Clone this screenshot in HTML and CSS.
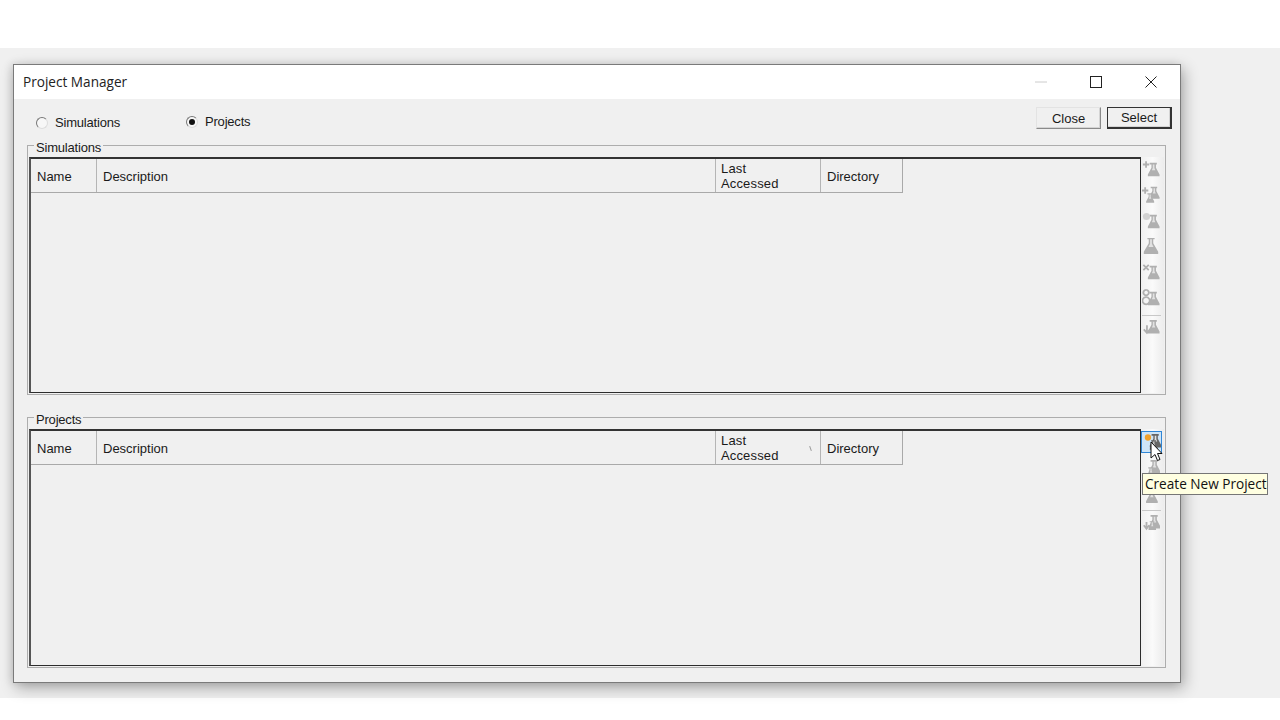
FILE: index.html
```html
<!DOCTYPE html>
<html lang="en">
<head>
<meta charset="utf-8">
<title>Project Manager</title>
<link rel="stylesheet" href="styles.css">
</head>
<body>
<svg class="defs" width="0" height="0" aria-hidden="true">
  <symbol id="flask" viewBox="0 0 20 20">
    <path d="M8.500 3h8v2h-1V8.500l4 7.500V18H6.500v-2l4-7.500V5h-2z" fill="currentColor"/>
    <path d="M12 5h1.800V9l1 2.500h-3.800l1-2.500z" fill="#e2e2e2"/>
  </symbol>
</svg>
<main class="desktop">
  <section class="window">
    <header class="titlebar">
      <span class="title">Project Manager</span>
      <div class="winbtns">
        <svg class="winbtn" viewBox="0 0 12 12"><path d="M0 6h12" stroke="#ccc" fill="none"/></svg>
        <svg class="winbtn" viewBox="0 0 12 12"><rect x=".5" y=".5" width="11" height="11" stroke="#222" fill="none"/></svg>
        <svg class="winbtn" viewBox="0 0 12 12"><path d="M.5.500l11 11M11.500.500l-11 11" stroke="#222" fill="none"/></svg>
      </div>
    </header>
    <div class="body">
      <div class="topbar">
        <div class="radios">
          <label class="radio radio-sim"><span class="dot"></span>Simulations</label>
          <label class="radio radio-proj"><span class="dot on"></span>Projects</label>
        </div>
        <div class="actions">
          <button class="btn">Close</button>
          <button class="btn default">Select</button>
        </div>
      </div>

      <div class="group group-sim">
        <span class="legend">Simulations</span>
        <div class="table">
          <div class="thead">
            <div class="th c-name">Name</div>
            <div class="th c-desc">Description</div>
            <div class="th c-last">Last<br>Accessed</div>
            <div class="th c-dir">Directory</div>
          </div>
        </div>
        <div class="tools">
          <svg class="tool" viewBox="0 0 20 20"><use href="#flask"/><path d="M1 5h7M4.500 1.500v7" stroke="currentColor" stroke-width="2"/></svg>
          <svg class="tool" viewBox="0 0 20 20"><use href="#flask" transform="translate(2 -2) scale(.9)"/><use href="#flask" transform="translate(0 6) scale(.7)"/><path d="M0 5h7M3.500 1.500v7" stroke="currentColor" stroke-width="2"/></svg>
          <svg class="tool" viewBox="0 0 20 20"><use href="#flask"/><circle cx="5" cy="5" r="4" fill="#d2d2d2"/></svg>
          <svg class="tool" viewBox="0 0 20 20"><path d="M6 1h8v1.500h-1.500V7l5.500 9.500V19H2v-2.500L7.500 7V2.500H6z" fill="currentColor"/><path d="M9 2.500h2V7.500l1.800 3.500H7.200L9 7.500z" fill="#e2e2e2"/></svg>
          <svg class="tool" viewBox="0 0 20 20"><use href="#flask"/><path d="M1.500 2l6 6M7.500 2l-6 6" stroke="currentColor" stroke-width="2"/></svg>
          <svg class="tool" viewBox="0 0 20 20"><use href="#flask"/><path d="M4.500 1a3 3 0 1 0 .1 0M4.500 9a4 4 0 1 0 .1 0" stroke="currentColor" stroke-width="2" fill="none"/></svg>
          <hr class="sep">
          <svg class="tool" viewBox="0 0 20 20"><use href="#flask" transform="translate(0 -2)"/><path d="M5.500 7v8M2 11.500l3.500 4 3.500-4" stroke="currentColor" stroke-width="2" fill="none"/></svg>
        </div>
      </div>

      <div class="group group-proj">
        <span class="legend">Projects</span>
        <div class="table">
          <div class="thead">
            <div class="th c-name">Name</div>
            <div class="th c-desc">Description</div>
            <div class="th c-last">Last<br>Accessed<span class="sort"></span></div>
            <div class="th c-dir">Directory</div>
          </div>
        </div>
        <div class="tools">
          <div class="tool-hover">
            <svg class="tool dark" viewBox="0 0 20 20"><use href="#flask" transform="translate(1 -2)"/><use href="#flask" transform="translate(3 6) scale(.7)"/><circle cx="5.500" cy="5" r="3.500" fill="#f0a02a"/></svg>
          </div>
          <svg class="tool" viewBox="0 0 20 20"><use href="#flask" transform="translate(1 -2)"/><use href="#flask" transform="translate(1 7) scale(.7)"/></svg>
          <svg class="tool" viewBox="0 0 20 20"><use href="#flask" transform="translate(-2 2)"/></svg>
          <hr class="sep">
          <svg class="tool" viewBox="0 0 20 20"><use href="#flask" transform="translate(1 -2)"/><use href="#flask" transform="translate(3 6) scale(.65)"/><path d="M5 9v7M2 12.500l3 4 3-4" stroke="currentColor" stroke-width="2" fill="none"/></svg>
        </div>
      </div>
    </div>

    <svg class="cursor" viewBox="0 0 13 21"><path d="M1 1v16l4-3.500 2.500 6 2.500-1-2.500-6H12z" fill="#fff" stroke="#111" stroke-width="1"/></svg>
    <div class="tooltip">Create New Project</div>
  </section>
</main>
</body>
</html>
```

FILE: styles.css
```css
* { box-sizing: border-box; }
html, body { margin: 0; height: 720px; background: #fff; overflow: hidden; }
.defs { position: absolute; }
.desktop {
  margin-top: 48px;
  height: 650px;
  background: #f0f0f0;
  padding: 16px 0 0 13px;
}
.window {
  position: relative;
  width: 1168px;
  height: 619px;
  background: #f0f0f0;
  border: 1px solid #7a7a7a;
  box-shadow: 3px 5px 14px rgba(0, 0, 0, .3), -2px 0 8px rgba(0, 0, 0, .1);
  display: flex;
  flex-direction: column;
  font: 13px/15px "Liberation Sans", Arial, sans-serif;
  color: #1a1a1a;
}
.titlebar {
  height: 34px;
  flex: none;
  background: #fff;
  display: flex;
  align-items: center;
  justify-content: space-between;
  padding: 0 23px 0 9px;
}
.title { font: 13.600px/18px "Open Sans", sans-serif; color: #222; }
.winbtns { display: flex; gap: 43px; }
.winbtn { width: 12px; height: 12px; display: block; }
.body { flex: 1; display: flex; flex-direction: column; padding: 0 14px 0 13px; }
.topbar {
  height: 46px;
  flex: none;
  display: flex;
  justify-content: space-between;
  padding-top: 8px;
}
.radios { display: flex; }
.radio { display: flex; align-items: center; height: 15px; margin-top: 7px; gap: 7px; letter-spacing: -.2px; }
.radio-sim { width: 150px; margin-left: 9px; margin-top: 8px; }
.dot {
  width: 12px; height: 12px; border-radius: 50%;
  background: #f7f7f7;
  border: 1px solid;
  border-color: #777 #ddd #ddd #777;
  position: relative; flex: none;
}
.dot.on::after {
  content: ""; position: absolute; left: 2px; top: 2px;
  width: 6px; height: 6px; border-radius: 50%; background: #111;
}
.actions { display: flex; gap: 6px; margin-right: -6px; }
.btn {
  width: 65px; height: 22px; padding: 0;
  font: inherit; color: inherit;
  background: #f0f0f0;
  border: 1px solid #e3e3e3;
  border-right-color: #8a8a8a; border-bottom-color: #8a8a8a;
  box-shadow: inset -1px -1px 0 #d4d4d4;
}
.btn.default { border: 2px solid #333; border-top-width: 1px; border-left-width: 1px; }
.group {
  position: relative;
  width: 1139px;
  border: 1px solid #adadad;
  padding: 11px 1px 1px 1px;
  display: flex;
}
.group-sim { height: 250px; }
.group-proj { height: 251px; margin-top: 22px; }
.legend {
  position: absolute;
  left: 6px; top: -6px;
  padding: 0 2px;
  background: #f0f0f0;
  line-height: 15px;
  letter-spacing: -.2px;
}
.table {
  width: 1112px;
  height: 100%;
  border: 1px solid #2c2c2c;
  border-width: 2px 1px 1px 2px;
  border-top-color: #333;
  border-left-color: #555;
  background: #f0f0f0;
  flex: none;
}
.thead {
  width: 872px;
  height: 34px;
  display: flex;
  border-bottom: 1px solid #a9a9a9;
  border-right: 1px solid #a9a9a9;
}
.th {
  position: relative;
  display: flex;
  align-items: center;
  padding: 1px 0 0 6px;
  border-right: 1px solid #b5b5b5;
}
.c-name { width: 66px; }
.c-desc { width: 619px; }
.c-last { width: 105px; display: block; padding-top: 2px; padding-left: 5px; letter-spacing: .15px; }
.c-dir { flex: 1; border-right: 0; }
.sort {
  position: absolute; right: 9px; top: 15px;
  width: 1px; height: 5px; background: #999;
  transform: rotate(-20deg);
}
.tools {
  width: 24px;
  height: 100%;
  display: flex;
  flex-direction: column;
  align-items: flex-start;
  gap: 7.800px;
  padding: 3px 0 0 1px;
  background: linear-gradient(90deg, #f0f0f0, #fafafa 50%, #ececec);
  color: #b0b0b0;
}
.tool { width: 18px; height: 18px; display: block; flex: none; filter: blur(.4px); }
.tool.dark { color: #666; }
.tool-hover {
  width: 21px; height: 22px; flex: none;
  border: 1px solid #2f86d6;
  background: #cde4f7;
  margin: -1px 0 -2px -1px;
  display: flex; align-items: center; justify-content: center;
}
.sep { width: 19px; height: 1px; border: 0; background: #c8c8c8; margin: 0 0 -5px; flex: none; }
.cursor { position: absolute; left: 1136px; top: 376px; width: 13px; height: 21px; }
.tooltip {
  position: absolute;
  left: 1128px; top: 408px;
  width: 126px; height: 22px;
  background: #ffffe1;
  border: 1px solid #767676;
  font: 13.600px/20px "Open Sans", sans-serif;
  padding-left: 2px;
  white-space: nowrap;
  color: #111;
}
```
